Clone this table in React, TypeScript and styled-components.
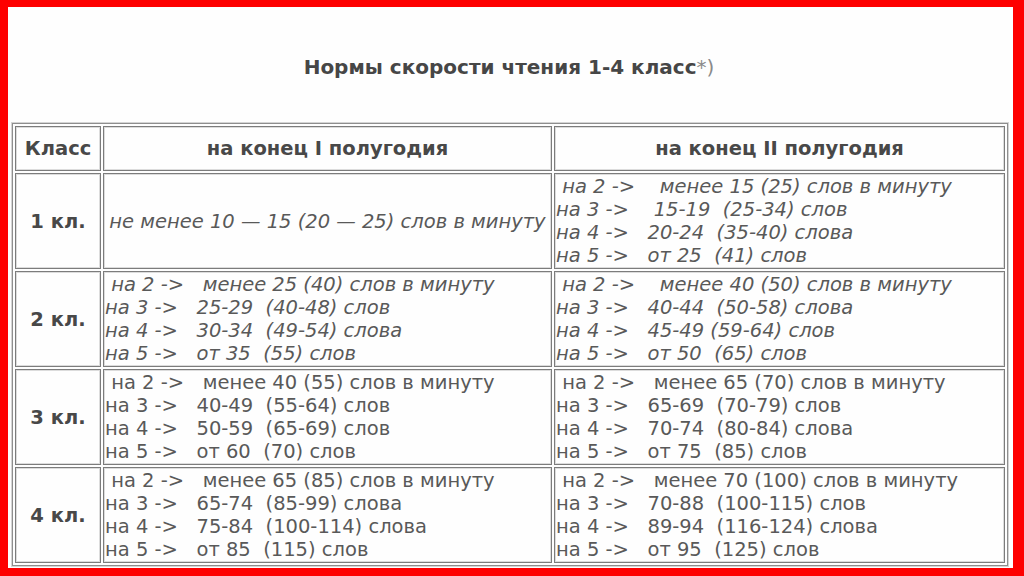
import React from "react";
import styled, { createGlobalStyle } from "styled-components";

const GlobalStyle = createGlobalStyle`
  html, body {
    margin: 0;
    padding: 0;
    background: #fe0000;
  }
`;

interface IRow {
  label: string;
  italic: boolean;
  first: string[];
  second: string[];
  firstCentered?: boolean;
}

const rows: IRow[] = [
  {
    label: "1 кл.",
    italic: true,
    firstCentered: true,
    first: ["не менее 10 — 15 (20 — 25) слов в минуту"],
    second: [
      " на 2 ->    менее 15 (25) слов в минуту",
      "на 3 ->    15-19  (25-34) слов",
      "на 4 ->   20-24  (35-40) слова",
      "на 5 ->   от 25  (41) слов",
    ],
  },
  {
    label: "2 кл.",
    italic: true,
    first: [
      " на 2 ->   менее 25 (40) слов в минуту",
      "на 3 ->   25-29  (40-48) слов",
      "на 4 ->   30-34  (49-54) слова",
      "на 5 ->   от 35  (55) слов",
    ],
    second: [
      " на 2 ->    менее 40 (50) слов в минуту",
      "на 3 ->   40-44  (50-58) слова",
      "на 4 ->   45-49 (59-64) слов",
      "на 5 ->   от 50  (65) слов",
    ],
  },
  {
    label: "3 кл.",
    italic: false,
    first: [
      " на 2 ->   менее 40 (55) слов в минуту",
      "на 3 ->   40-49  (55-64) слов",
      "на 4 ->   50-59  (65-69) слов",
      "на 5 ->   от 60  (70) слов",
    ],
    second: [
      " на 2 ->   менее 65 (70) слов в минуту",
      "на 3 ->   65-69  (70-79) слов",
      "на 4 ->   70-74  (80-84) слова",
      "на 5 ->   от 75  (85) слов",
    ],
  },
  {
    label: "4 кл.",
    italic: false,
    first: [
      " на 2 ->   менее 65 (85) слов в минуту",
      "на 3 ->   65-74  (85-99) слова",
      "на 4 ->   75-84  (100-114) слова",
      "на 5 ->   от 85  (115) слов",
    ],
    second: [
      " на 2 ->   менее 70 (100) слов в минуту",
      "на 3 ->   70-88  (100-115) слов",
      "на 4 ->   89-94  (116-124) слова",
      "на 5 ->   от 95  (125) слов",
    ],
  },
];

export default function App() {
  return (
    <>
      <GlobalStyle />
      <Frame>
        <Sheet>
          <Title>
            Нормы скорости чтения 1-4 класс<TitleNote>*)</TitleNote>
          </Title>
          <NormsTable>
            <colgroup>
              <Col $w={86} />
              <Col $w={449} />
              <Col $w={451} />
            </colgroup>
            <tbody>
              <tr>
                <HeadCell>Класс</HeadCell>
                <HeadCell>на конец I полугодия</HeadCell>
                <HeadCell>на конец II полугодия</HeadCell>
              </tr>
              {rows.map((row) => (
                <tr key={row.label}>
                  <LabelCell>{row.label}</LabelCell>
                  <DataCell $italic={row.italic} $centered={row.firstCentered}>
                    {row.first.map((line, i) => (
                      <Line key={i}>{line}</Line>
                    ))}
                  </DataCell>
                  <DataCell $italic={row.italic}>
                    {row.second.map((line, i) => (
                      <Line key={i}>{line}</Line>
                    ))}
                  </DataCell>
                </tr>
              ))}
            </tbody>
          </NormsTable>
        </Sheet>
      </Frame>
    </>
  );
}

const Frame = styled.div`
  width: 1024px;
  height: 576px;
  box-sizing: border-box;
  padding: 7px 11px 8px 8px;
  background: #fe0000;
`;

const Sheet = styled.div`
  height: 100%;
  box-sizing: border-box;
  background: #fefefe;
  padding: 0 5px 0 4px;
  display: flex;
  flex-direction: column;
`;

const Title = styled.div`
  height: 116px;
  box-sizing: border-box;
  padding-top: 48px;
  text-align: center;
  font-family: "DejaVu Sans", Verdana, sans-serif;
  font-weight: bold;
  font-size: 20px;
  color: #464646;
  padding-right: 2px;
`;

const TitleNote = styled.span`
  font-weight: normal;
  color: #8a8a8a;
`;

const NormsTable = styled.table`
  width: 996px;
  table-layout: fixed;
  border-collapse: separate;
  border-spacing: 2px;
  border: 1px solid #8e8e8e;
  box-shadow: 0 0 0 1px #d4d4d4;
  font-family: "DejaVu Sans", Verdana, sans-serif;
  color: #595959;
`;

const Col = styled.col<{ $w: number }>`
  width: ${(p) => p.$w}px;
`;

const Cell = styled.td`
  box-sizing: border-box;
  border: 1px solid #7c7c7c;
  box-shadow: inset 0 0 0 1px #dcdcdc;
  padding: 1px;
`;

const HeadCell = styled(Cell)`
  height: 45px;
  text-align: center;
  vertical-align: middle;
  font-weight: bold;
  font-size: 19.5px;
  color: #484848;
`;

const LabelCell = styled(Cell)`
  height: 96px;
  text-align: center;
  vertical-align: middle;
  font-weight: bold;
  font-size: 19.5px;
  color: #484848;
`;

const DataCell = styled(Cell)<{ $italic: boolean; $centered?: boolean }>`
  vertical-align: middle;
  font-size: 19.5px;
  line-height: 23px;
  font-style: ${(p) => (p.$italic ? "italic" : "normal")};
  text-align: ${(p) => (p.$centered ? "center" : "left")};
  white-space: pre;
  overflow: hidden;
`;

const Line = styled.div`
  white-space: pre;
`;
